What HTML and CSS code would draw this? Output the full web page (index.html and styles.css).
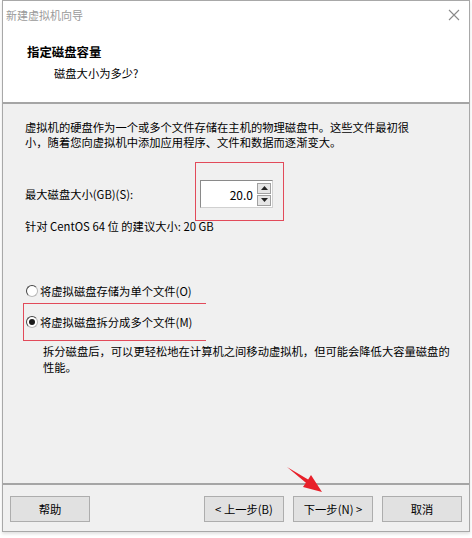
FILE: index.html
```html
<!DOCTYPE html>
<html lang="zh-CN">
<head>
<meta charset="utf-8">
<title>新建虚拟机向导</title>
<link rel="stylesheet" href="styles.css">
</head>
<body>
<div class="window">
  <div class="titlebar">
    <span class="title">新建虚拟机向导</span>
    <svg class="close" width="12" height="12" viewBox="0 0 12 12"><path d="M1 1L11 11M11 1L1 11" stroke="#8a8a8a" stroke-width="1.1" fill="none"/></svg>
  </div>
  <div class="header">
    <div class="h-title">指定磁盘容量</div>
    <div class="h-sub">磁盘大小为多少?</div>
  </div>
  <div class="sep"></div>
  <div class="content">
    <p class="para">虚拟机的硬盘作为一个或多个文件存储在主机的物理磁盘中。这些文件最初很<br>小，随着您向虚拟机中添加应用程序、文件和数据而逐渐变大。</p>
    <div class="size-row">
      <span class="size-label">最大磁盘大小(GB)(S):</span>
      <div class="spin">
        <span class="spin-value">20.0</span>
        <div class="spin-btns">
          <div class="spin-btn"><svg width="7" height="4" viewBox="0 0 7 4"><path d="M3.5 0L7 4H0Z" fill="#222"/></svg></div>
          <div class="spin-btn"><svg width="7" height="4" viewBox="0 0 7 4"><path d="M0 0H7L3.5 4Z" fill="#222"/></svg></div>
        </div>
      </div>
      <div class="mark mark-size"></div>
    </div>
    <div class="recommend">针对 CentOS 64 位 的建议大小: 20 GB</div>
    <div class="radios">
      <label class="radio-row"><span class="radio"></span><span>将虚拟磁盘存储为单个文件(O)</span></label>
      <label class="radio-row second"><span class="radio checked"></span><span>将虚拟磁盘拆分成多个文件(M)</span><span class="mark mark-radio"></span></label>
      <p class="desc">拆分磁盘后，可以更轻松地在计算机之间移动虚拟机，但可能会降低大容量磁盘的<br>性能。</p>
    </div>
  </div>
  <div class="sep"></div>
  <div class="footer">
    <button class="btn">帮助</button>
    <div class="spacer"></div>
    <button class="btn">&lt; 上一步(B)</button>
    <button class="btn">下一步(N) &gt;</button>
    <button class="btn">取消</button>
  </div>
</div>
<svg class="arrow" width="472" height="538" viewBox="0 0 472 538">
  <polygon points="287,467 308.1,479.4 311,475 322,492 303,487 305.9,482.7" fill="#e8202a"/>
</svg>
</body>
</html>
```
FILE: styles.css
```css
html, body {
  margin: 0;
  padding: 0;
  background: #ffffff;
}
body {
  position: relative;
  width: 472px;
  height: 538px;
  overflow: hidden;
  font-family: "Noto Sans CJK SC", "Liberation Sans", sans-serif;
  font-size: 11.3px;
  color: #000;
}
.window {
  margin-left: 2px;
  width: 466px;
  height: 530px;
  border: 1px solid #a8a8a8;
  display: flex;
  flex-direction: column;
  background: #f0f0f0;
  box-shadow: 0 2px 3px rgba(0,0,0,0.12);
}
.titlebar {
  height: 28px;
  background: #fff;
  display: flex;
  align-items: center;
  justify-content: space-between;
  padding: 0 9px 0 3px;
}
.title {
  color: #9a9a9a;
  font-size: 11px;
  line-height: 14px;
}
.close {
  display: block;
}
.header {
  background: #fff;
  height: 73px;
  box-sizing: border-box;
  padding: 15px 0 0 24px;
}
.h-title {
  font-weight: bold;
  font-size: 12.4px;
  line-height: 16px;
}
.h-sub {
  margin-top: 5px;
  margin-left: 27px;
  line-height: 16px;
}
.sep {
  height: 2px;
  background: #a5a5a5;
}
.content {
  flex: 1;
  padding: 16px 0 0 22px;
  line-height: 15px;
  white-space: nowrap;
}
.para {
  margin: 0;
}
.size-row {
  position: relative;
  margin-top: 30px;
  height: 28px;
  display: flex;
  align-items: center;
}
.size-label {
  width: 175px;
}
.spin {
  width: 73px;
  height: 28px;
  box-sizing: border-box;
  border: 1px solid #8a8a8a;
  border-right-color: #d0d0d0;
  border-bottom-color: #d0d0d0;
  background: #fff;
  display: flex;
  align-items: center;
}
.spin-value {
  flex: 1;
  text-align: right;
  padding-right: 4px;
  font-size: 12px;
}
.spin-btns {
  width: 14px;
  display: flex;
  flex-direction: column;
  gap: 1px;
  margin-right: 1px;
}
.spin-btn {
  height: 11px;
  box-sizing: border-box;
  border: 1px solid #a0a0a0;
  background: #e6e6e6;
  display: flex;
  align-items: center;
  justify-content: center;
}
.spin-btn svg {
  display: block;
}
.mark {
  position: absolute;
  border: 1px solid #e24a5a;
  pointer-events: none;
}
.mark-size {
  left: 170px;
  top: -18px;
  width: 87px;
  height: 57px;
}
.recommend {
  margin-top: 11px;
}
.radios {
  margin-top: 49px;
  margin-left: 1px;
}
.radio-row {
  position: relative;
  display: flex;
  align-items: center;
  gap: 2px;
  height: 16px;
}
.radio-row.second {
  margin-top: 15px;
}
.radio {
  width: 12px;
  height: 12px;
  box-sizing: border-box;
  border: 1px solid;
  border-color: #444 #b8b8b8 #b8b8b8 #444;
  border-radius: 50%;
  background: #fff;
  display: flex;
  align-items: center;
  justify-content: center;
}
.radio.checked::after {
  content: "";
  width: 6px;
  height: 6px;
  border-radius: 50%;
  background: #1a1a1a;
}
.mark-radio {
  left: -3px;
  top: -11px;
  width: 182px;
  height: 36px;
  border-right: none;
}
.desc {
  margin: 13px 0 0 17px;
  line-height: 16px;
}
.footer {
  height: 46px;
  box-sizing: border-box;
  padding: 11px 7px 9px 7px;
  display: flex;
  gap: 9px;
}
.spacer {
  flex: 1;
}
.btn {
  width: 80px;
  height: 26px;
  box-sizing: border-box;
  border: 1px solid #adadad;
  background: #e1e1e1;
  font-family: "Noto Sans CJK SC", "Liberation Sans", sans-serif;
  font-size: 11.3px;
  color: #000;
  padding: 0;
  line-height: 14px;
}
.arrow {
  position: absolute;
  left: 0;
  top: 0;
  pointer-events: none;
}
```
